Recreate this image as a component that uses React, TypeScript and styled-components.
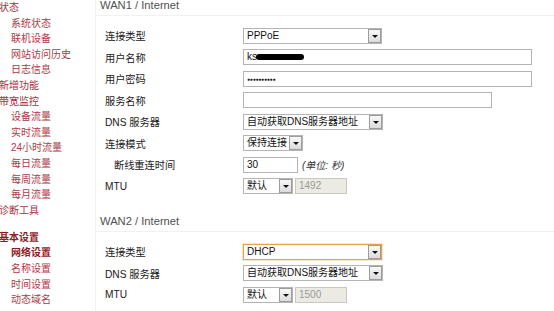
import React from "react";
import styled, { createGlobalStyle, css } from "styled-components";

const GlobalStyle = createGlobalStyle`
  html, body { margin: 0; padding: 0; background: #ffffff; }
  body {
    font-family: "Liberation Sans", Arial, "Noto Sans CJK SC", sans-serif;
    -webkit-font-smoothing: antialiased;
  }
`;

const Page = styled.div`
  display: grid;
  grid-template-columns: 95px 1fr;
  width: 554px;
  height: 311px;
  overflow: hidden;
`;

const Sidebar = styled.ul`
  list-style: none;
  margin: 0;
  padding: 0;
  font-size: 10px;
  line-height: 15.6px;
`;

const NavItem = styled.li<{ $level: "top" | "sub"; $bold?: boolean; $gap?: boolean }>`
  white-space: nowrap;
  color: ${(p) => (p.$bold ? "#8e1c28" : p.$level === "top" ? "#a4303c" : "#ad3a47")};
  font-weight: ${(p) => (p.$bold ? 700 : 400)};
  ${(p) =>
    p.$level === "top"
      ? css`margin-left: -1px;`
      : css`padding-left: 11px;`}
  ${(p) => p.$gap && css`margin-top: 11.5px;`}
`;

const Main = styled.main`
  border-left: 1px solid #f3f3f3;
  display: flex;
  flex-direction: column;
`;

const SectionHeader = styled.div<{ $spaced?: boolean }>`
  box-sizing: border-box;
  height: 16px;
  padding-left: 4px;
  font-size: 11.2px;
  line-height: 11px;
  color: #505050;
  border-bottom: 1px solid #f1f1f1;
  margin-top: ${(p) => (p.$spaced ? "19.5px" : "0")};
`;

const Form = styled.div`
  padding: 8.75px 0 0 9px;
  display: flex;
  flex-direction: column;
`;

const Row = styled.div`
  display: grid;
  grid-template-columns: 138px 1fr;
  align-items: center;
  height: 21.5px;
`;

const Label = styled.div<{ $indent?: boolean }>`
  font-size: 10.2px;
  color: #1a1a1a;
  white-space: nowrap;
  padding-left: ${(p) => (p.$indent ? "9px" : "0")};
`;

const Controls = styled.div`
  display: flex;
  align-items: center;
  gap: 2px;
`;

const SelectBox = styled.div<{ $w: number; $focus?: boolean }>`
  box-sizing: border-box;
  width: ${(p) => p.$w}px;
  height: 16px;
  display: flex;
  align-items: stretch;
  border: 1px solid ${(p) => (p.$focus ? "#e5a34a" : "#b4b4b4")};
  box-shadow: ${(p) => (p.$focus ? "0 0 0 0.5px #f3c987" : "none")};
  background: #fff;
`;

const SelectText = styled.span`
  flex: 1;
  padding-left: 3px;
  font-size: 10px;
  line-height: 14px;
  color: #111;
  white-space: nowrap;
  overflow: hidden;
`;

const ArrowButton = styled.span`
  box-sizing: border-box;
  width: 13px;
  border: 1px solid #9c9c9c;
  background: linear-gradient(#f8f8f8, #dcdcdc);
  display: flex;
  align-items: center;
  justify-content: center;
  &::after {
    content: "";
    width: 0;
    height: 0;
    border-left: 3px solid transparent;
    border-right: 3px solid transparent;
    border-top: 3px solid #111;
    margin-top: 1px;
  }
`;

const Field = styled.div<{ $w: number; $readonly?: boolean }>`
  box-sizing: border-box;
  width: ${(p) => p.$w}px;
  height: 16px;
  border: 1px solid ${(p) => (p.$readonly ? "#c8c8c0" : "#b4b4b4")};
  background: ${(p) => (p.$readonly ? "#ecebe3" : "#fff")};
  color: ${(p) => (p.$readonly ? "#9a9a9a" : "#111")};
  font-size: 10px;
  line-height: 14px;
  padding-left: 3px;
  display: flex;
  align-items: center;
  white-space: nowrap;
`;

const Redacted = styled.span`
  display: inline-block;
  width: 48px;
  height: 6px;
  margin-left: -1px;
  border-radius: 3px;
  background: #000;
  filter: blur(0.4px);
`;

const Dots = styled.span`
  font-size: 5px;
  letter-spacing: -0.2px;
  line-height: 14px;
  color: #111;
`;

const Unit = styled.span`
  margin-left: 2px;
  font-size: 10px;
  font-style: italic;
  color: #333;
  white-space: nowrap;
`;

type SelectProps = { w: number; value: string; focus?: boolean };
const Select = ({ w, value, focus }: SelectProps) => (
  <SelectBox $w={w} $focus={focus}>
    <SelectText>{value}</SelectText>
    <ArrowButton />
  </SelectBox>
);

const nav: { t: string; level: "top" | "sub"; bold?: boolean; gap?: boolean }[] = [
  { t: "状态", level: "top" },
  { t: "系统状态", level: "sub" },
  { t: "联机设备", level: "sub" },
  { t: "网站访问历史", level: "sub" },
  { t: "日志信息", level: "sub" },
  { t: "新增功能", level: "top" },
  { t: "带宽监控", level: "top" },
  { t: "设备流量", level: "sub" },
  { t: "实时流量", level: "sub" },
  { t: "24小时流量", level: "sub" },
  { t: "每日流量", level: "sub" },
  { t: "每周流量", level: "sub" },
  { t: "每月流量", level: "sub" },
  { t: "诊断工具", level: "top" },
  { t: "基本设置", level: "top", bold: true, gap: true },
  { t: "网络设置", level: "sub", bold: true },
  { t: "名称设置", level: "sub" },
  { t: "时间设置", level: "sub" },
  { t: "动态域名", level: "sub" },
];

export default function App() {
  return (
    <>
      <GlobalStyle />
      <Page>
        <Sidebar>
          {nav.map((n) => (
            <NavItem key={n.t} $level={n.level} $bold={n.bold} $gap={n.gap}>
              {n.t}
            </NavItem>
          ))}
        </Sidebar>
        <Main>
          <SectionHeader>WAN1 / Internet</SectionHeader>
          <Form>
            <Row>
              <Label>连接类型</Label>
              <Controls>
                <Select w={139} value="PPPoE" />
              </Controls>
            </Row>
            <Row>
              <Label>用户名称</Label>
              <Controls>
                <Field $w={289}>
                  ks<Redacted />
                </Field>
              </Controls>
            </Row>
            <Row>
              <Label>用户密码</Label>
              <Controls>
                <Field $w={289}>
                  <Dots>●●●●●●●●●●</Dots>
                </Field>
              </Controls>
            </Row>
            <Row>
              <Label>服务名称</Label>
              <Controls>
                <Field $w={249} />
              </Controls>
            </Row>
            <Row>
              <Label>DNS 服务器</Label>
              <Controls>
                <Select w={140} value="自动获取DNS服务器地址" />
              </Controls>
            </Row>
            <Row>
              <Label>连接模式</Label>
              <Controls>
                <Select w={60} value="保持连接" />
              </Controls>
            </Row>
            <Row>
              <Label $indent>断线重连时间</Label>
              <Controls>
                <Field $w={55}>30</Field>
                <Unit>(单位: 秒)</Unit>
              </Controls>
            </Row>
            <Row>
              <Label>MTU</Label>
              <Controls>
                <Select w={50} value="默认" />
                <Field $w={52} $readonly>
                  1492
                </Field>
              </Controls>
            </Row>
          </Form>
          <SectionHeader $spaced>WAN2 / Internet</SectionHeader>
          <Form>
            <Row>
              <Label>连接类型</Label>
              <Controls>
                <Select w={139} value="DHCP" focus />
              </Controls>
            </Row>
            <Row>
              <Label>DNS 服务器</Label>
              <Controls>
                <Select w={140} value="自动获取DNS服务器地址" />
              </Controls>
            </Row>
            <Row>
              <Label>MTU</Label>
              <Controls>
                <Select w={50} value="默认" />
                <Field $w={52} $readonly>
                  1500
                </Field>
              </Controls>
            </Row>
          </Form>
        </Main>
      </Page>
    </>
  );
}
